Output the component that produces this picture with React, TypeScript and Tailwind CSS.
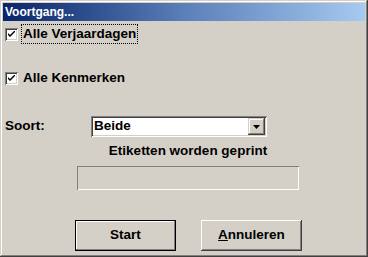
import React from "react";

function CheckBox() {
  return (
    <div className="w-[13px] h-[13px] bg-white shrink-0 shadow-[inset_1px_1px_#808080,inset_-1px_-1px_#ffffff,inset_2px_2px_#404040,inset_-2px_-2px_#D4D0C8] flex items-center justify-center">
      <svg width="7" height="7" viewBox="0 0 7 7">
        <path d="M0 2 L0 4 L2 6 L7 1 L7 -1 L2 4 Z" fill="#000" />
      </svg>
    </div>
  );
}

export default function App() {
  return (
    <div
      className="w-[368px] h-[257px] bg-[#D4D0C8] p-[3px] flex flex-col text-black shadow-[inset_-1px_-1px_#404040,inset_1px_1px_#D4D0C8,inset_-2px_-2px_#808080,inset_2px_2px_#ffffff]"
      style={{ fontFamily: '"Liberation Sans", Arial, sans-serif' }}
    >
      <div className="h-[18px] bg-gradient-to-r from-[#0A246A] via-[#5B7FB8] to-[#A6CAF0] flex items-center pl-[2px] text-white text-[12px] font-bold">
        Voortgang...
      </div>
      <div className="flex flex-col text-[13.5px] font-bold">
        <div className="mt-[3px] h-[20px] flex items-center">
          <div className="ml-[2px]">
            <CheckBox />
          </div>
          <div className="ml-[3px] h-[20px] px-[1px] flex items-center border border-dotted border-black">
            Alle Verjaardagen
          </div>
        </div>
        <div className="mt-[24px] h-[20px] flex items-center">
          <div className="ml-[2px]">
            <CheckBox />
          </div>
          <div className="ml-[4px] h-[20px] px-[1px] flex items-center">
            Alle Kenmerken
          </div>
        </div>
        <div className="mt-[28px] h-[21px] flex items-center">
          <div className="ml-[2px] w-[86px]">Soort:</div>
          <div className="w-[176px] h-[21px] bg-white flex items-center shadow-[inset_1px_1px_#808080,inset_-1px_-1px_#ffffff,inset_2px_2px_#404040,inset_-2px_-2px_#D4D0C8] p-[2px]">
            <div className="flex-1 pl-[1px]">Beide</div>
            <div className="w-[17px] h-[17px] bg-[#D4D0C8] flex items-center justify-center shadow-[inset_-1px_-1px_#404040,inset_1px_1px_#D4D0C8,inset_-2px_-2px_#808080,inset_2px_2px_#ffffff]">
              <svg width="7" height="4" viewBox="0 0 7 4">
                <path d="M0 0 H7 L3.5 4 Z" fill="#000" />
              </svg>
            </div>
          </div>
        </div>
        <div className="mt-[7px] h-[14px] flex items-center justify-center pl-[8px]">
          Etiketten worden geprint
        </div>
        <div className="mt-[8px] ml-[74px] w-[222px] h-[24px] shadow-[inset_1px_1px_#808080,inset_-1px_-1px_#ffffff]" />
        <div className="mt-[30px] flex">
          <div className="ml-[72px] w-[101px] h-[31px] flex items-center justify-center bg-[#D4D0C8] shadow-[inset_0_0_0_1px_#000,inset_-2px_-2px_#808080,inset_2px_2px_#ffffff]">
            Start
          </div>
          <div className="ml-[25px] w-[101px] h-[31px] flex items-center justify-center bg-[#D4D0C8] shadow-[inset_-1px_-1px_#404040,inset_1px_1px_#ffffff,inset_-2px_-2px_#808080]">
            <span>
              <span className="underline">A</span>nnuleren
            </span>
          </div>
        </div>
      </div>
    </div>
  );
}
